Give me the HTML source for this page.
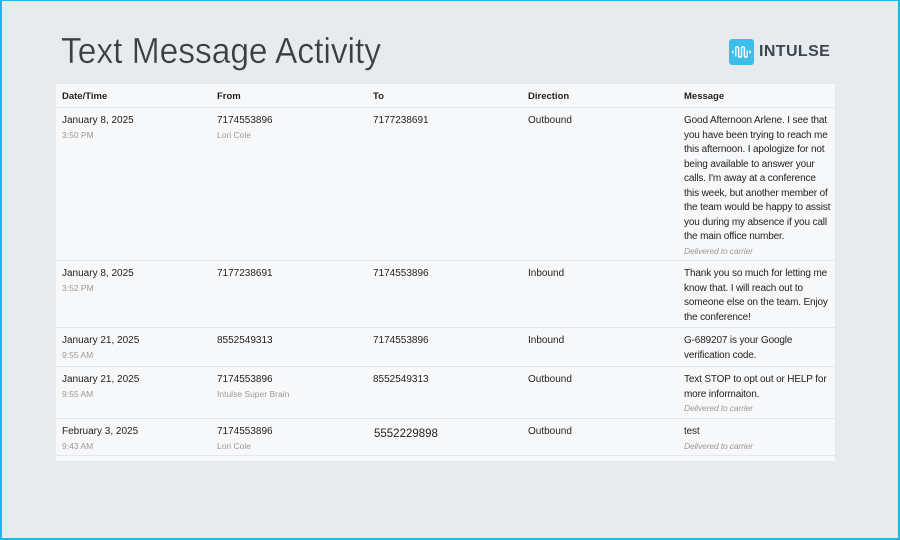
<!DOCTYPE html>
<html><head><style>
*{margin:0;padding:0;box-sizing:border-box}
body{width:900px;height:540px;overflow:hidden;background:#e8ebee;font-family:"Liberation Sans",sans-serif;color:#222}
.frame{position:absolute;left:0;top:0;width:900px;height:540px;border:2px solid #1fb5e8;border-top-width:1px}
h1{position:absolute;left:61px;top:30px;font-size:36px;font-weight:normal;color:#3a3f44;transform:scaleX(0.93);transform-origin:left top;white-space:nowrap;-webkit-text-stroke:0.35px #e8ebee}
.logo{position:absolute;left:729px;top:39px;display:flex;align-items:center}
.logo .ic{width:25px;height:26px;background:#3dbdea;border-radius:3px}
.logo span{font-weight:bold;font-size:16px;color:#3b4650;margin-left:5px;letter-spacing:0.4px}
.tbl{position:absolute;left:56px;top:84px;width:779px;height:377px;background:#f7f8fa}
.row{position:absolute;left:0;width:779px;border-bottom:1px solid #e4e6e9}
.c{position:absolute;font-size:10px;line-height:14.5px;color:#222}
.m{letter-spacing:-0.15px;width:148px}
.s{color:#999;font-size:8.5px;line-height:12px}
.i{color:#999;font-size:8.5px;font-style:italic;line-height:12px}
.h .c{font-weight:bold;font-size:9.5px;top:6px}
</style></head><body>
<div class="frame"></div>
<h1>Text Message Activity</h1>
<div class="logo"><div class="ic"><svg width="25" height="26" viewBox="0 0 26 26"><path d="M4 14v-2M7 17V9a1.5 1.5 0 013 0v8a1.5 1.5 0 003 0V9a1.5 1.5 0 013 0v8a1.5 1.5 0 003 0v-5M22 14v-2" stroke="#fff" stroke-width="1.5" fill="none" stroke-linecap="round"/></svg></div><span>INTULSE</span></div>
<div class="tbl">
<div class="row h" style="top:0;height:24px"><div class="c" style="left:6px">Date/Time</div><div class="c" style="left:161px">From</div><div class="c" style="left:317px">To</div><div class="c" style="left:472px">Direction</div><div class="c" style="left:628px">Message</div></div>
<div class="row" style="top:24px;height:153px">
<div class="c" style="left:6px;top:6px">January 8, 2025<div class="s">3:50 PM</div></div>
<div class="c" style="left:161px;top:6px">7174553896<div class="s">Lori Cole</div></div>
<div class="c" style="left:317px;top:6px">7177238691</div>
<div class="c" style="left:472px;top:6px">Outbound</div>
<div class="c m" style="left:628px;top:6px">Good Afternoon Arlene. I see that you have been trying to reach me this afternoon. I apologize for not being available to answer your calls. I'm away at a conference this week, but another member of the team would be happy to assist you during my absence if you call the main office number.<div class="i">Delivered to carrier</div></div>
</div>
<div class="row" style="top:177px;height:67px">
<div class="c" style="left:6px;top:6px">January 8, 2025<div class="s">3:52 PM</div></div>
<div class="c" style="left:161px;top:6px">7177238691</div>
<div class="c" style="left:317px;top:6px">7174553896</div>
<div class="c" style="left:472px;top:6px">Inbound</div>
<div class="c m" style="left:628px;top:6px">Thank you so much for letting me know that. I will reach out to someone else on the team. Enjoy the conference!</div>
</div>
<div class="row" style="top:244px;height:39px">
<div class="c" style="left:6px;top:6px">January 21, 2025<div class="s">9:55 AM</div></div>
<div class="c" style="left:161px;top:6px">8552549313</div>
<div class="c" style="left:317px;top:6px">7174553896</div>
<div class="c" style="left:472px;top:6px">Inbound</div>
<div class="c m" style="left:628px;top:6px">G-689207 is your Google verification code.</div>
</div>
<div class="row" style="top:283px;height:52px">
<div class="c" style="left:6px;top:6px">January 21, 2025<div class="s">9:55 AM</div></div>
<div class="c" style="left:161px;top:6px">7174553896<div class="s">Intulse Super Brain</div></div>
<div class="c" style="left:317px;top:6px">8552549313</div>
<div class="c" style="left:472px;top:6px">Outbound</div>
<div class="c m" style="left:628px;top:6px">Text STOP to opt out or HELP for more informaiton.<div class="i">Delivered to carrier</div></div>
</div>
<div class="row" style="top:335px;height:37px">
<div class="c" style="left:6px;top:6px">February 3, 2025<div class="s">9:43 AM</div></div>
<div class="c" style="left:161px;top:6px">7174553896<div class="s">Lori Cole</div></div>
<div class="c" style="left:318px;top:8px;font-size:11.5px">5552229898</div>
<div class="c" style="left:472px;top:6px">Outbound</div>
<div class="c m" style="left:628px;top:6px">test<div class="i">Delivered to carrier</div></div>
</div>
</div>
</body></html>
